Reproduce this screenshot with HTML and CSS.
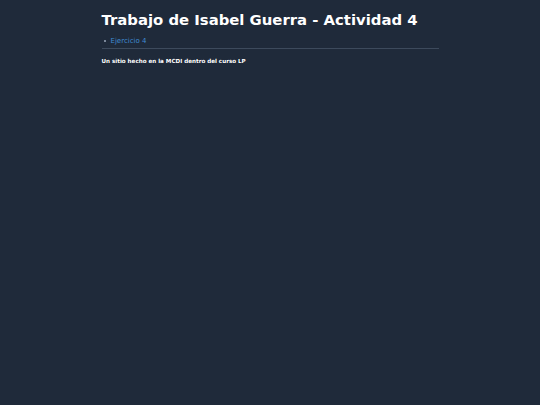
FILE: index.html
```html
<!DOCTYPE html>
<html lang="es">
<head>
<meta charset="utf-8">
<title>Actividad 4</title>
<link rel="stylesheet" href="styles.css">
</head>
<body>
<div class="container">
  <header class="header">
    <h1 class="title">Trabajo de Isabel Guerra - Actividad 4</h1>
    <ul class="nav">
      <li class="nav-item"><a href="#" class="nav-link">Ejercicio 4</a></li>
    </ul>
  </header>
  <footer class="footer">Un sitio hecho en la MCDI dentro del curso LP</footer>
</div>
</body>
</html>
```
FILE: styles.css
```css
html, body {
  margin: 0;
  padding: 0;
  background: #1f2a3a;
  min-height: 100%;
}
body {
  font-family: "DejaVu Sans", sans-serif;
  color: #ffffff;
}
.container {
  width: 337px;
  margin: 0 auto;
  padding-top: 11px;
}
.header {
  border-bottom: 1px solid #3d4a5c;
  padding-bottom: 2px;
}
.title {
  margin: 0;
  font-size: 14.85px;
  line-height: 18px;
  font-weight: bold;
  white-space: nowrap;
}
.nav {
  margin: 7px 0 0 0;
  padding: 0;
  list-style: none;
  font-size: 7px;
  line-height: 10px;
}
.nav-item {
  display: flex;
  align-items: center;
}
.nav-item::before {
  content: "";
  width: 2px;
  height: 2px;
  border-radius: 50%;
  background: #9aa6b8;
  margin: 0 5px 0 2px;
}
.nav-link {
  color: #3f8bd2;
  text-decoration: none;
}
.footer {
  margin-top: 8px;
  font-size: 5.6px;
  line-height: 8px;
  font-weight: bold;
}
```
